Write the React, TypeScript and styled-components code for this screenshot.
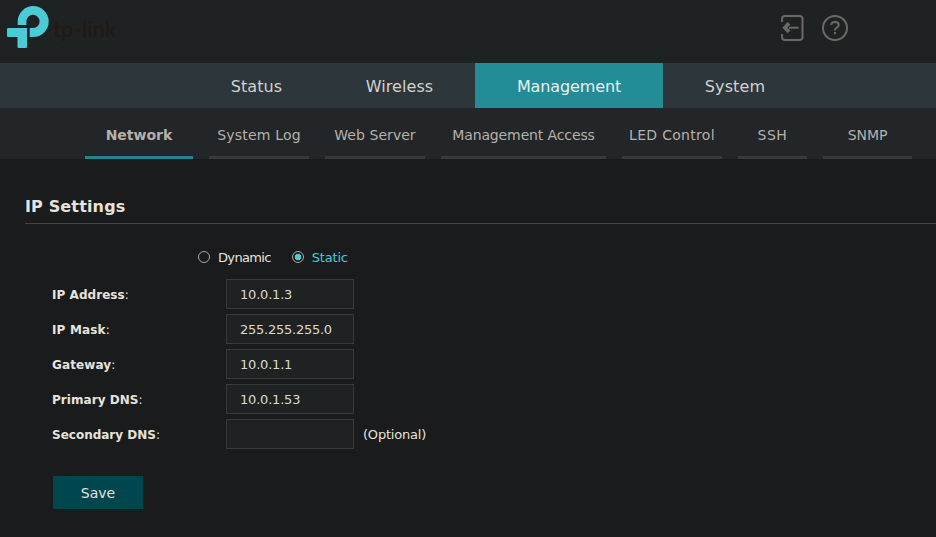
import React from "react";
import styled, { createGlobalStyle } from "styled-components";

const GlobalStyle = createGlobalStyle`
  * { box-sizing: border-box; }
  body {
    margin: 0;
    background: #1a1b1c;
    color: #e6e3dc;
    font: 13px/18px Verdana, "DejaVu Sans", sans-serif;
    overflow: hidden;
  }
`;

const Page = styled.div`
  min-height: 537px;
  background: #1a1b1c;
`;

const Header = styled.header`
  display: flex;
  align-items: flex-start;
  justify-content: space-between;
  height: 63px;
  padding: 0 87px 0 7px;
  background: #1f2222;
`;

const Logo = styled.svg`
  display: block;
  width: 120px;
  height: 60px;
`;

const HeaderActions = styled.div`
  display: flex;
  gap: 17px;
  padding-top: 14px;
`;

const IconButton = styled.button`
  display: block;
  padding: 0;
  border: 0;
  background: none;
  color: #6b6865;
  svg { display: block; }
`;

const MainNav = styled.nav`
  display: flex;
  height: 45px;
  padding-left: 189px;
  background: #2c363b;
`;

const MainTab = styled.a<{ $width: number; $spacing: number; $active?: boolean }>`
  width: ${(p) => p.$width}px;
  padding-top: 1px;
  line-height: 46px;
  text-align: center;
  white-space: nowrap;
  font-size: 16px;
  letter-spacing: ${(p) => p.$spacing}px;
  color: ${(p) => (p.$active ? "#e9f0ee" : "#d3d1cb")};
  background: ${(p) => (p.$active ? "#238c96" : "transparent")};
`;

const SubNav = styled.nav`
  display: flex;
  gap: 16px;
  height: 51px;
  padding-left: 85px;
  background: #232628;
`;

const SubTab = styled.a<{ $width: number; $spacing: number; $active?: boolean }>`
  flex: none;
  width: ${(p) => p.$width}px;
  padding-top: 1px;
  line-height: 52px;
  text-align: center;
  white-space: nowrap;
  font-size: 14px;
  font-weight: ${(p) => (p.$active ? 700 : 400)};
  letter-spacing: ${(p) => p.$spacing}px;
  color: #b5b1a9;
  box-shadow: inset 0 -3px ${(p) => (p.$active ? "#218690" : "#38393a")};
`;

const Content = styled.main`
  padding: 34px 0 0 25px;
`;

const Title = styled.h1`
  height: 31px;
  margin: 0;
  border-bottom: 1px solid #434444;
  font-size: 16px;
  line-height: 28px;
  letter-spacing: 0.15px;
`;

const Form = styled.form`
  padding: 24px 0 0 27px;
`;

const RadioRow = styled.div`
  display: flex;
  gap: 21px;
  height: 31px;
  padding-left: 146px;
`;

const RadioLabel = styled.label<{ $active?: boolean }>`
  display: flex;
  gap: 8px;
  height: 18px;
  align-items: center;
  color: ${(p) => (p.$active ? "#4acbd6" : "#e6e3dc")};
`;

const RadioText = styled.span<{ $spacing: number }>`
  padding-top: 1px;
  letter-spacing: ${(p) => p.$spacing}px;
`;

const Radio = styled.span<{ $active?: boolean }>`
  width: 12px;
  height: 12px;
  border: 1px solid #a5a5a5;
  border-radius: 50%;
  background: ${(p) =>
    p.$active ? "radial-gradient(circle, #4acbd6 3px, transparent 3.6px)" : "transparent"};
`;

const Field = styled.div`
  display: flex;
  align-items: center;
  height: 30px;
  margin-bottom: 5px;
`;

const FieldLabel = styled.label<{ $spacing: number }>`
  width: 174px;
  padding-top: 2px;
  font-size: 12px;
  letter-spacing: ${(p) => p.$spacing}px;
  b { font-weight: 700; }
`;

const Input = styled.input<{ $spacing: number }>`
  width: 128px;
  height: 30px;
  padding: 1px 13px 0;
  border: 1px solid #363a3a;
  border-radius: 0;
  outline: 0;
  background: #1f2222;
  color: #dcd9cf;
  font: 13px "DejaVu Sans", sans-serif;
  letter-spacing: ${(p) => p.$spacing}px;
`;

const Hint = styled.span`
  margin-left: 9px;
  padding-top: 2px;
  letter-spacing: -0.2px;
`;

const SaveButton = styled.button`
  display: block;
  width: 90px;
  height: 33px;
  margin: 27px 0 0 1px;
  padding: 0;
  border: 0;
  background: #00464f;
  color: #e0e3df;
  font: 14px "DejaVu Sans", sans-serif;
`;

const mainTabs = [
  { label: "Status", width: 135, spacing: 0.05 },
  { label: "Wireless", width: 151, spacing: 0.05 },
  { label: "Management", width: 188, spacing: -0.12, active: true },
  { label: "System", width: 144, spacing: 0.1 },
];

const subTabs = [
  { label: "Network", width: 108, spacing: 0, active: true },
  { label: "System Log", width: 100, spacing: 0.2 },
  { label: "Web Server", width: 100, spacing: 0.05 },
  { label: "Management Access", width: 165, spacing: -0.12 },
  { label: "LED Control", width: 100, spacing: 0.3 },
  { label: "SSH", width: 69, spacing: 0.5 },
  { label: "SNMP", width: 89, spacing: -0.1 },
];

const fields = [
  { label: "IP Address", value: "10.0.1.3", labelSpacing: 0.05, spacing: -0.2 },
  { label: "IP Mask", value: "255.255.255.0", labelSpacing: 0.15, spacing: -0.25 },
  { label: "Gateway", value: "10.0.1.1", labelSpacing: 0.1, spacing: -0.2 },
  { label: "Primary DNS", value: "10.0.1.53", labelSpacing: 0.05, spacing: -0.2 },
  { label: "Secondary DNS", value: "", labelSpacing: 0, spacing: 0, optional: true },
];

export default function App() {
  return (
    <Page>
      <GlobalStyle />
      <Header>
        <Logo viewBox="7 0 120 60">
          <g fill="#4acbd6">
            <path d="M17.7 25V21.6A15.5 15.5 0 1 1 33.2 37.1H29.7V28H33.2A6.6 6.6 0 1 0 26.4 21.4V25Z" />
            <path d="M8.2 28H27V46.8Q27 48 25.8 48H18.7Q17.5 48 17.5 46.8V37H8.2Q7 37 7 35.8V29.2Q7 28 8.2 28Z" />
          </g>
          <text x="53" y="37" fill="#231815" stroke="#231815" strokeWidth="0.4" fontFamily="Lato, sans-serif" fontSize="22" textLength="63.5" lengthAdjust="spacingAndGlyphs">
            tp-link
          </text>
        </Logo>
        <HeaderActions>
          <IconButton type="button" aria-label="Log out">
            <svg width="24" height="28" viewBox="0 0 24 28" fill="none" stroke="currentColor" strokeWidth="2">
              <path d="M2 8V5Q2 2 5 2H19.5Q22.5 2 22.5 5V23Q22.5 26 19.5 26H5Q2 26 2 23V20" />
              <path d="M9 13.7H18.5" />
              <path d="M9 9.3L4.8 13.7L9 18.1" strokeWidth="3.6" />
            </svg>
          </IconButton>
          <IconButton type="button" aria-label="Help">
            <svg width="28" height="27" viewBox="0 0 28 27" fill="none" stroke="currentColor" strokeWidth="2">
              <circle cx="14" cy="13" r="12" />
              <path d="M10.3 9.9Q10.3 7 14.1 7Q17.8 7 17.8 9.8Q17.8 11.5 15.8 12.6Q14 13.5 14 15.4" />
              <path d="M14 17V19.2" />
            </svg>
          </IconButton>
        </HeaderActions>
      </Header>
      <MainNav>
        {mainTabs.map((t) => (
          <MainTab key={t.label} $width={t.width} $spacing={t.spacing} $active={t.active}>
            {t.label}
          </MainTab>
        ))}
      </MainNav>
      <SubNav>
        {subTabs.map((t) => (
          <SubTab key={t.label} $width={t.width} $spacing={t.spacing} $active={t.active}>
            {t.label}
          </SubTab>
        ))}
      </SubNav>
      <Content>
        <Title>IP Settings</Title>
        <Form>
          <RadioRow>
            <RadioLabel>
              <Radio />
              <RadioText $spacing={-0.65}>Dynamic</RadioText>
            </RadioLabel>
            <RadioLabel $active>
              <Radio $active />
              <RadioText $spacing={-0.2}>Static</RadioText>
            </RadioLabel>
          </RadioRow>
          {fields.map((f) => (
            <Field key={f.label}>
              <FieldLabel $spacing={f.labelSpacing}>
                <b>{f.label}</b>:
              </FieldLabel>
              <Input $spacing={f.spacing} defaultValue={f.value} />
              {f.optional && <Hint>(Optional)</Hint>}
            </Field>
          ))}
          <SaveButton type="button">Save</SaveButton>
        </Form>
      </Content>
    </Page>
  );
}
